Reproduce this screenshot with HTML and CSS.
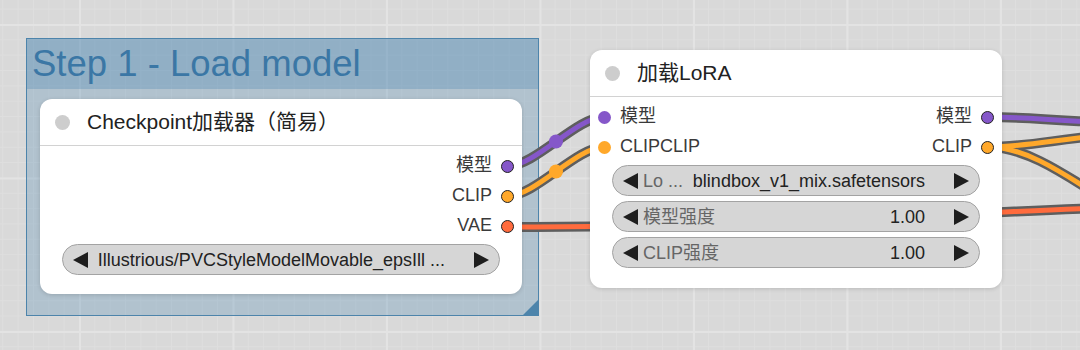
FILE: index.html
```html
<!DOCTYPE html>
<html>
<head>
  <meta charset="utf-8">
  <title>Workflow</title>
  <link rel="stylesheet" href="styles.css">
</head>
<body>
  <div class="canvas">

    <div class="group">
      <div class="group-title">Step 1 - Load model</div>
      <div class="group-body"></div>
    </div>

    <svg class="links" width="1080" height="350" viewBox="0 0 1080 350">
      <g class="link-outline">
        <path d="M508 166 C535 166 577 117 604 117"/>
        <path d="M508 196 C535 196 577 147 604 147"/>
        <path d="M508 227 C700 227 950 214 1120 207"/>
        <path d="M988 117 C1030 117 1070 121 1120 124"/>
        <path d="M988 147 C1030 147 1060 138 1120 134"/>
        <path d="M988 147 C1020 147 1050 163 1120 210"/>
      </g>
      <path class="link model" d="M508 166 C535 166 577 117 604 117"/>
      <path class="link clip" d="M508 196 C535 196 577 147 604 147"/>
      <path class="link vae" d="M508 227 C700 227 950 214 1120 207"/>
      <path class="link model" d="M988 117 C1030 117 1070 121 1120 124"/>
      <path class="link clip" d="M988 147 C1030 147 1060 138 1120 134"/>
      <path class="link clip" d="M988 147 C1020 147 1050 163 1120 210"/>
      <circle class="link-mid model" cx="556" cy="141.5" r="7"/>
      <circle class="link-mid clip" cx="556" cy="171.5" r="7"/>
    </svg>

    <div class="node ckpt">
      <div class="node-head">
        <span class="status"></span>
        <span class="node-title">Checkpoint加载器（简易）</span>
      </div>
      <div class="node-body">
        <div class="slots">
          <div class="slot-col"></div>
          <div class="slot-col">
            <div class="slot out">模型<i class="dot model"></i></div>
            <div class="slot out">CLIP<i class="dot clip"></i></div>
            <div class="slot out">VAE<i class="dot vae"></i></div>
          </div>
        </div>
        <div class="widgets">
          <div class="widget">
            <svg class="arrow" width="15" height="16" viewBox="0 0 15 16"><polygon points="15,0 15,16 0,8"/></svg>
            <span class="w-value">Illustrious/PVCStyleModelMovable_epsIll ...</span>
            <svg class="arrow" width="15" height="16" viewBox="0 0 15 16"><polygon points="0,0 0,16 15,8"/></svg>
          </div>
        </div>
      </div>
    </div>

    <div class="node lora">
      <div class="node-head">
        <span class="status"></span>
        <span class="node-title">加载LoRA</span>
      </div>
      <div class="node-body">
        <div class="slots">
          <div class="slot-col">
            <div class="slot in"><i class="dot model linked"></i>模型</div>
            <div class="slot in"><i class="dot clip linked"></i>CLIPCLIP</div>
          </div>
          <div class="slot-col">
            <div class="slot out">模型<i class="dot model"></i></div>
            <div class="slot out">CLIP<i class="dot clip"></i></div>
          </div>
        </div>
        <div class="widgets">
          <div class="widget">
            <svg class="arrow" width="15" height="16" viewBox="0 0 15 16"><polygon points="15,0 15,16 0,8"/></svg>
            <span class="w-label">Lo ...</span>
            <span class="w-value">blindbox_v1_mix.safetensors</span>
            <svg class="arrow" width="15" height="16" viewBox="0 0 15 16"><polygon points="0,0 0,16 15,8"/></svg>
          </div>
          <div class="widget">
            <svg class="arrow" width="15" height="16" viewBox="0 0 15 16"><polygon points="15,0 15,16 0,8"/></svg>
            <span class="w-label">模型强度</span>
            <span class="w-value">1.00</span>
            <svg class="arrow" width="15" height="16" viewBox="0 0 15 16"><polygon points="0,0 0,16 15,8"/></svg>
          </div>
          <div class="widget">
            <svg class="arrow" width="15" height="16" viewBox="0 0 15 16"><polygon points="15,0 15,16 0,8"/></svg>
            <span class="w-label">CLIP强度</span>
            <span class="w-value">1.00</span>
            <svg class="arrow" width="15" height="16" viewBox="0 0 15 16"><polygon points="0,0 0,16 15,8"/></svg>
          </div>
        </div>
      </div>
    </div>

  </div>
</body>
</html>
```

FILE: styles.css
```css
* {
  box-sizing: border-box;
}
html, body {
  margin: 0;
  padding: 0;
  overflow: hidden;
}
body {
  font-family: "Liberation Sans", "Noto Sans CJK SC", sans-serif;
  line-height: 1.2;
  color: #222;
}
.canvas {
  position: relative;
  width: 1080px;
  height: 350px;
  background-color: #d9d9d9;
  background-image:
    linear-gradient(90deg, #e3e3e3 2px, transparent 2px),
    linear-gradient(#e3e3e3 2px, transparent 2px),
    linear-gradient(90deg, #dedede 1px, transparent 1px),
    linear-gradient(#dedede 1px, transparent 1px);
  background-size: 153.5px 153.5px, 153.5px 153.5px, 15.35px 15.35px, 15.35px 15.35px;
  background-position: 79px 24px, 79px 24px, 79px 24px, 79px 24px;
}

/* group */
.group {
  position: absolute;
  left: 26px;
  top: 38px;
  width: 513px;
  height: 278px;
  display: flex;
  flex-direction: column;
  border: 1.5px solid #4d84ab;
  background: rgba(52, 120, 170, .24);
}
.group-title {
  height: 50px;
  padding-left: 5px;
  display: flex;
  align-items: center;
  font-size: 36.5px;
  color: #3b77a5;
  background: rgba(52, 120, 170, .25);
}
.group-body {
  flex: 1;
}
.group::after {
  content: "";
  position: absolute;
  right: 0;
  bottom: 0;
  width: 15px;
  height: 15px;
  background: #4d84ab;
  clip-path: polygon(100% 0, 100% 100%, 0 100%);
}

/* links */
.links {
  position: absolute;
  left: 0;
  top: 0;
}
.link-outline path {
  fill: none;
  stroke: #5e5e5e;
  stroke-width: 10;
}
.link {
  fill: none;
  stroke-width: 5;
}
.link.model { stroke: #8557c9; }
.link.clip { stroke: #ffa82a; }
.link.vae { stroke: #ff6b3d; }
.link-mid.model { fill: #8557c9; }
.link-mid.clip { fill: #ffa82a; }

/* nodes */
.node {
  position: absolute;
  background: #fff;
  border-radius: 12px;
  box-shadow: 0 1px 4px rgba(0, 0, 0, .15);
}
.ckpt {
  left: 40px;
  top: 99px;
  width: 482px;
  height: 195px;
}
.lora {
  left: 590px;
  top: 50px;
  width: 412px;
  height: 238px;
}
.node-head {
  height: 47px;
  padding-left: 15px;
  display: flex;
  align-items: center;
  border-bottom: 1px solid #d2d2d2;
}
.status {
  width: 15px;
  height: 15px;
  border-radius: 50%;
  background: #cdcdcd;
  margin-right: 17px;
}
.node-title {
  font-size: 21px;
  color: #222;
}
.node-body {
  padding: 5px 8px 0;
}
.slots {
  display: flex;
  justify-content: space-between;
}
.slot {
  height: 30px;
  display: flex;
  align-items: center;
  font-size: 18px;
  color: #3a3a3a;
}
.slot.out {
  justify-content: flex-end;
}
.dot {
  display: block;
  width: 13px;
  height: 13px;
  border-radius: 50%;
  border: 1.5px solid #222;
}
.slot.out .dot {
  margin-left: 9px;
}
.slot.in .dot {
  margin-right: 9px;
}
.dot.linked {
  border: none;
}
.dot.model { background: #8557c9; }
.dot.clip { background: #ffa82a; }
.dot.vae { background: #ff6b3d; }

/* widgets */
.widgets {
  margin: 3px 14px 0;
  display: flex;
  flex-direction: column;
  gap: 5px;
}
.widget {
  height: 31px;
  padding: 0 10px;
  display: flex;
  align-items: center;
  border: 1px solid #a3a3a3;
  border-radius: 16px;
  background: #d6d6d6;
  font-size: 18px;
  line-height: 20px;
}
.arrow {
  flex: none;
  fill: #1e1e1e;
}
.w-label {
  margin-left: 5px;
  color: #666;
  white-space: nowrap;
}
.w-value {
  flex: 1;
  margin: 0 29px 0 7px;
  text-align: right;
  color: #222;
  white-space: nowrap;
}
```
